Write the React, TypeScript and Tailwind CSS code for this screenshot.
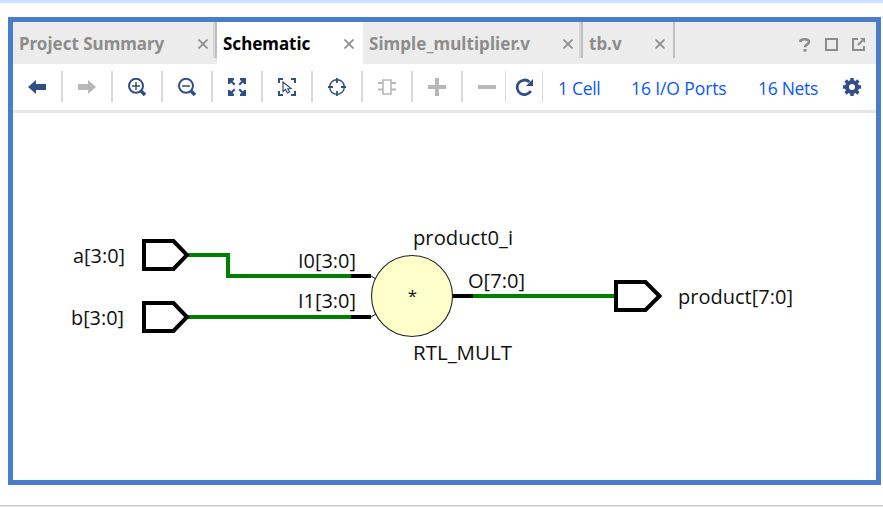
import type { ReactNode } from "react";

const NAVY = "#314f86";
const GRAY = "#b8b8b8";

function Close() {
  return (
    <svg width="10" height="10" viewBox="0 0 10 10" className="shrink-0" stroke="#8c8c8c" strokeWidth="1.700">
      <path d="M.5 .5 9.5 9.5M9.5 .5 .5 9.5" />
    </svg>
  );
}

function Tab({ label, className, textClass, divider }: { label: string; className: string; textClass: string; divider?: ReactNode }) {
  return (
    <div className={"flex h-full shrink-0 " + className}>
      <div className="flex min-w-0 flex-1 items-center justify-between pl-[6px] pt-px">
        <span className={"whitespace-nowrap text-[17px] leading-[22px] font-bold " + textClass}>{label}</span>
        <Close />
      </div>
      {divider}
    </div>
  );
}

function Icon({ children }: { children: ReactNode }) {
  return (
    <svg width="18" height="18" viewBox="0 0 18 18" fill="none" className="block shrink-0">
      {children}
    </svg>
  );
}

function Cell({ children, className = "w-[50px] border-r-2" }: { children: ReactNode; className?: string }) {
  return <div className={"flex h-[31px] shrink-0 items-center justify-center border-[#dadada] " + className}>{children}</div>;
}

function DoubleDivider() {
  return <div className="h-9 w-1 border-l-2 border-[#d6d6d6] bg-[#bfbfbf]" />;
}

function Label({ x, y, w, children }: { x: number; y: number; w: number; children: string }) {
  return (
    <text x={x} y={y} textLength={w} lengthAdjust="spacingAndGlyphs">
      {children}
    </text>
  );
}

function Schematic() {
  return (
    <svg width="863" height="367" viewBox="13 113 863 367" className="block font-['Open_Sans',sans-serif]" fill="none">
      <g stroke="#008000" strokeWidth="4">
        <path d="M187 255H228V276H352" />
        <path d="M187 317H352" />
        <path d="M473 296H616" />
      </g>
      <g stroke="#000" strokeWidth="4">
        <path d="M351 276H371M351 317H371M452 296H473" />
        <path d="M144 241H173.500L187 255L173.500 269H144Z" />
        <path d="M144 303H173.500L187 317L173.500 331H144Z" />
        <path d="M616 282H645.500L659.500 296L645.500 310H616Z" />
      </g>
      <path d="M371 276L376 279M371 317L376 314" stroke="#000" />
      <circle cx="412" cy="296" r="40.500" fill="#ffffcc" stroke="#222" strokeWidth="1.100" />
      <g fill="#111" fontSize="20.500">
        <Label x={73} y={263} w={52}>a[3:0]</Label>
        <Label x={71} y={325} w={53}>b[3:0]</Label>
        <Label x={298} y={268} w={58}>I0[3:0]</Label>
        <Label x={298} y={308} w={58}>I1[3:0]</Label>
        <Label x={413} y={245} w={100}>product0_i</Label>
        <Label x={468} y={288} w={57}>O[7:0]</Label>
        <Label x={413} y={360} w={99}>RTL_MULT</Label>
        <Label x={678} y={304} w={115}>product[7:0]</Label>
        <text x="412.500" y="302" fontSize="17" textAnchor="middle">*</text>
      </g>
    </svg>
  );
}

export default function App() {
  return (
    <div className="flex h-[507px] w-[883px] flex-col overflow-hidden bg-white font-['Noto_Sans','Open_Sans',sans-serif]">
      <div className="h-[3px] shrink-0 bg-[#ccdfff]" />
      <div className="mt-[14px] ml-2 flex h-[468px] w-[873px] shrink-0 flex-col border-[5px] border-[#4a7ccc]">
        <div className="flex h-[42px] shrink-0 bg-[#ececec]">
          <Tab label="Project Summary" className="w-[204px] [&_svg]:mr-[5px]" textClass="text-[#8c8c8c]" divider={<DoubleDivider />} />
          <Tab label="Schematic" className="w-[146px] bg-white [&_svg]:mr-[9px]" textClass="text-black" />
          <Tab label="Simple_multiplier.v" className="w-[220px] [&_svg]:mr-[6px]" textClass="text-[#8c8c8c] tracking-[0.08px]" divider={<DoubleDivider />} />
          <Tab label="tb.v" className="w-[92px] [&_svg]:mr-[8px]" textClass="text-[#8c8c8c]" divider={<div className="h-9 w-[2px] bg-[#bfbfbf]" />} />
          <div className="ml-auto flex items-center gap-[14px] pt-[3px] pr-[11px]">
            <svg width="12" height="14" viewBox="0 0 12 14" fill="none" stroke="#8c8c8c" strokeWidth="2.600">
              <path d="M1 4C1.500 1.800 3.300 1.300 5.500 1.300C8.500 1.300 10 2.300 10 4.100C10 6.600 6 6 6 9.300" />
              <path d="M4.500 12.300H7.500" />
            </svg>
            <svg width="13" height="13" viewBox="0 0 13 13" fill="none" stroke="#8c8c8c" strokeWidth="2">
              <path d="M1 1H12V12H1Z" />
            </svg>
            <svg width="13" height="13" viewBox="0 0 13 13" fill="none" stroke="#8c8c8c" strokeWidth="2">
              <path d="M6 1H1V12H12V8" />
              <path d="M6 7 10.500 2.500" />
              <path d="M8 0H13V5Z" fill="#8c8c8c" stroke="none" />
            </svg>
          </div>
        </div>

        <div className="flex h-[49px] shrink-0 items-start border-b-[3px] border-[#e6e6e6] pt-[7px]">
          <Cell>
            <Icon><path d="M0 9 8 2V6H18V12H8V16Z" fill={NAVY} /></Icon>
          </Cell>
          <Cell>
            <Icon><path d="M18 9 10 2V6H0V12H10V16Z" fill={GRAY} /></Icon>
          </Cell>
          <Cell>
            <Icon>
              <circle cx="8" cy="7.800" r="7" stroke={NAVY} strokeWidth="2" />
              <path d="M4 8H12M8 4V12" stroke={NAVY} strokeWidth="1.500" />
              <path d="M13 13 17 17" stroke={NAVY} strokeWidth="3.500" />
            </Icon>
          </Cell>
          <Cell>
            <Icon>
              <circle cx="8" cy="7.800" r="7" stroke={NAVY} strokeWidth="2" />
              <path d="M4 8H12" stroke={NAVY} strokeWidth="1.500" />
              <path d="M13 13 17 17" stroke={NAVY} strokeWidth="3.500" />
            </Icon>
          </Cell>
          <Cell>
            <Icon>
              <path d="M0 0H6V2L4.500 3 7.500 6 6 7.500 3 4.500 2 6H0ZM18 0V6H16L15 4.500 12 7.500 10.500 6 13.500 3 12 2V0ZM0 18V12H2L3 13.500 6 10.500 7.500 12 4.500 15 6 16V18ZM18 18H12V16L13.500 15 10.500 12 12 10.500 15 13.500 16 12H18Z" fill={NAVY} />
            </Icon>
          </Cell>
          <Cell>
            <Icon>
              <path d="M1 5V1H5M13 1H17V5M1 13V17H5M13 17H17V13" stroke={NAVY} strokeWidth="2" />
              <path d="M5 4V13.500L7.500 11.500 9.500 15 11.500 14 9.800 10.800 13 10.500Z" stroke={NAVY} strokeWidth="1.200" />
            </Icon>
          </Cell>
          <Cell>
            <Icon>
              <circle cx="9" cy="9" r="7.300" stroke={NAVY} strokeWidth="1.400" />
              <path d="M9 0V5M9 13V18M0 9H5M13 9H18" stroke={NAVY} strokeWidth="1.800" />
            </Icon>
          </Cell>
          <Cell>
            <Icon>
              <path d="M5 2H13V16H5Z" stroke={GRAY} strokeWidth="1.600" />
              <path d="M0 5H5M0 11.500H5M13 5H18M13 11.500H18" stroke={GRAY} strokeWidth="2" />
            </Icon>
          </Cell>
          <Cell>
            <Icon><path d="M0 9H18M9 0V18" stroke={GRAY} strokeWidth="4" /></Icon>
          </Cell>
          <Cell className="w-[43px] border-r pl-[6px]">
            <Icon><path d="M0 9H18" stroke={GRAY} strokeWidth="4" /></Icon>
          </Cell>
          <Cell className="w-[37px] border-r pr-px">
            <Icon>
              <path d="M14.500 4A7.300 7.300 0 1 0 15.800 13" stroke={NAVY} strokeWidth="2.800" />
              <path d="M18 1V8H11Z" fill={NAVY} />
            </Icon>
          </Cell>
          <div className="ml-[15px] flex h-[35px] items-center font-['Open_Sans',sans-serif] text-[17.5px] text-[#0a57ff]">
            <span className="w-[73px] whitespace-nowrap tracking-[-0.3px]">1 Cell</span>
            <span className="w-[127px] whitespace-nowrap tracking-[-0.1px]">16 I/O Ports</span>
            <span className="w-[85px] whitespace-nowrap tracking-[-0.3px]">16 Nets</span>
          </div>
          <div className="flex h-[31px] items-center">
            <Icon>
              <circle cx="9" cy="9" r="5" stroke={NAVY} strokeWidth="4" />
              <path d="M9 0V3M9 15V18M0 9H3M15 9H18M2.600 2.600 4.700 4.700M13.300 13.300 15.400 15.400M2.600 15.400 4.700 13.300M13.300 4.700 15.400 2.600" stroke={NAVY} strokeWidth="3.500" />
            </Icon>
          </div>
        </div>
        <Schematic />
      </div>
      <div className="mt-5 h-[2px] shrink-0 border-t border-[#c8c8c8] bg-[#e4e4e4]" />
    </div>
  );
}
